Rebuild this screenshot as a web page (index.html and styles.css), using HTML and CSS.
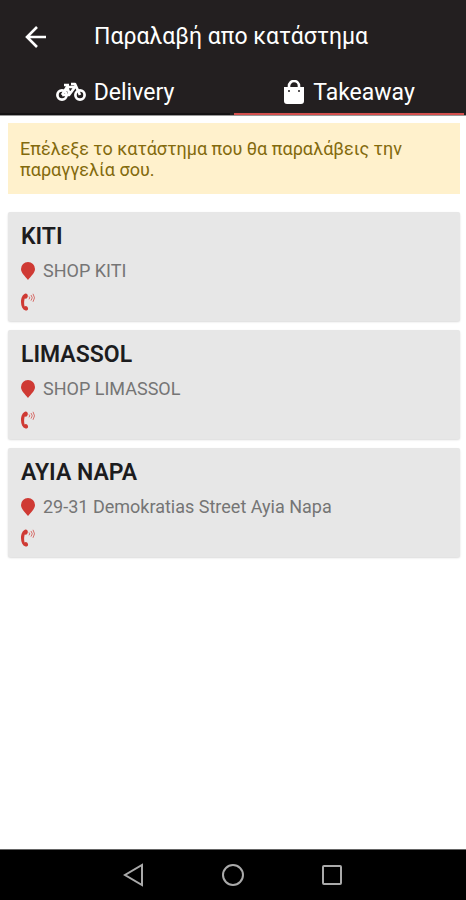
FILE: index.html
```html
<!DOCTYPE html>
<html lang="el">
<head>
  <meta charset="UTF-8">
  <meta name="viewport" content="width=device-width, initial-scale=1">
  <title>Παραλαβή απο κατάστημα</title>
  <link rel="stylesheet" href="styles.css">
</head>
<body>
  <!-- shared icons -->
  <svg class="sprite" aria-hidden="true">
    <symbol id="icon-pin" viewBox="0 0 14 18">
      <path d="M7 0a7 7 0 0 0-7 7c0 4 4 7 7 11 3-4 7-7 7-11a7 7 0 0 0-7-7z" fill="currentColor"/>
    </symbol>
    <symbol id="icon-phone" viewBox="0 0 14 18">
      <path d="M4.500.500C1.500 1.500 0 5 0 9c0 4.500 1.500 7.500 4.500 8.500 1.200.4 2.600-.5 2.600-1.800 0-1.400-1.200-2.700-2.400-2.700l-1 .4C3 12 2.900 7.500 3.800 5.500l1.200.2c1.200-.3 2-1.800 1.800-3.100C6.600 1.300 5.600.300 4.500.500z" fill="currentColor"/>
      <path d="M8 3.500q1.500 1.200 0 2.800M10 2q2.500 2.700 0 5.600M12 .8q3 4 0 8" fill="none" stroke="currentColor" stroke-width="1" opacity=".7"/>
    </symbol>
  </svg>

  <header class="header">
    <div class="title-bar">
      <button class="back" type="button" aria-label="Πίσω">
        <svg width="24" height="24" viewBox="0 0 24 24" fill="none" stroke="currentColor" stroke-width="2.600">
          <path d="M13 2 3 12l10 10M3 12h19"/>
        </svg>
      </button>
      <h1>Παραλαβή απο κατάστημα</h1>
    </div>
    <nav class="tabs">
      <a class="tab" href="#delivery">
        <svg width="30" height="20" viewBox="0 0 30 20" fill="none" stroke="currentColor" stroke-width="2.700" stroke-linejoin="round">
          <circle cx="6" cy="13" r="4.600"/>
          <circle cx="24" cy="13" r="4.600"/>
          <path d="M6 13l5-8h8l-6 8H6M11 5l3 8M24 13L19 2h-4M8 3h5"/>
        </svg>
        Delivery
      </a>
      <a class="tab active" href="#takeaway">
        <svg width="22" height="24" viewBox="0 0 22 24">
          <path d="M6 8V6a5 5 0 0 1 10 0v2" fill="none" stroke="currentColor" stroke-width="2.600"/>
          <path d="M1 7h20v14a3 3 0 0 1-3 3H4a3 3 0 0 1-3-3z" fill="currentColor"/>
          <circle cx="6" cy="11" r="1" fill="#231f20"/>
          <circle cx="16" cy="11" r="1" fill="#231f20"/>
        </svg>
        Takeaway
      </a>
    </nav>
  </header>

  <main class="content">
    <p class="notice">Επέλεξε το κατάστημα που θα παραλάβεις την παραγγελία σου.</p>

    <div class="shops">
      <section class="shop">
        <h2>KITI</h2>
        <p class="address"><svg class="icon"><use href="#icon-pin"/></svg>SHOP KITI</p>
        <a class="phone" href="#call-kiti" aria-label="Κλήση KITI"><svg class="icon"><use href="#icon-phone"/></svg></a>
      </section>
      <section class="shop">
        <h2>LIMASSOL</h2>
        <p class="address"><svg class="icon"><use href="#icon-pin"/></svg>SHOP LIMASSOL</p>
        <a class="phone" href="#call-limassol" aria-label="Κλήση LIMASSOL"><svg class="icon"><use href="#icon-phone"/></svg></a>
      </section>
      <section class="shop">
        <h2>AYIA NAPA</h2>
        <p class="address"><svg class="icon"><use href="#icon-pin"/></svg>29-31 Demokratias Street Ayia Napa</p>
        <a class="phone" href="#call-ayia-napa" aria-label="Κλήση AYIA NAPA"><svg class="icon"><use href="#icon-phone"/></svg></a>
      </section>
    </div>
  </main>

  <!-- system navigation -->
  <footer class="system-bar">
    <button type="button" aria-label="Back">
      <svg width="24" height="24" viewBox="0 0 24 24"><path d="M20 2v20L3 12z"/></svg>
    </button>
    <button type="button" aria-label="Home">
      <svg width="24" height="24" viewBox="0 0 24 24"><circle cx="12" cy="12" r="10"/></svg>
    </button>
    <button type="button" aria-label="Recent apps">
      <svg width="24" height="24" viewBox="0 0 24 24"><rect x="3" y="3" width="18" height="18" rx="1"/></svg>
    </button>
  </footer>
</body>
</html>
```
FILE: styles.css
```css
* {
  box-sizing: border-box;
}

body {
  display: flex;
  flex-direction: column;
  min-height: 100vh;
  margin: 0;
  background: #fff;
  color: #1c1c1e;
  font-family: Roboto, "Open Sans", sans-serif;
}

h1, h2, p {
  margin: 0;
}

svg {
  display: block;
  flex: none;
}

button {
  padding: 0;
  border: 0;
  background: none;
  color: inherit;
  cursor: pointer;
}

.sprite {
  display: none;
}

/* header */
.header {
  background: #231f20;
  color: #fff;
  border-bottom: 1px solid #999;
}

.title-bar {
  display: flex;
  align-items: center;
  gap: 46px;
  height: 73px;
  padding-left: 24px;
}

.title-bar h1 {
  font-size: 23px;
  font-weight: 400;
}

.tabs {
  display: flex;
  gap: 4px;
  padding-right: 2px;
}

.tab {
  flex: 1;
  display: flex;
  justify-content: center;
  align-items: center;
  gap: 8px;
  height: 42px;
  padding-bottom: 2px;
  border-bottom: 2px solid #141213;
  color: #fff;
  font-size: 23px;
  text-decoration: none;
}

.tab.active {
  border-bottom-color: #d4504e;
}

/* content */
.content {
  flex: 1;
  padding: 7px 6px 8px 8px;
}

.notice {
  padding: 15px 12px 14px;
  background: #fff1cc;
  color: #836a0c;
  font-size: 18px;
  line-height: 21px;
}

.shops {
  display: grid;
  gap: 9px;
  margin-top: 18px;
}

.shop {
  padding: 10px 13px;
  border-radius: 2px;
  background: #e7e7e7;
  box-shadow: 0 1px 2px rgba(0, 0, 0, 0.15);
}

.shop h2 {
  font-size: 23px;
  line-height: 30px;
  font-weight: 600;
}

.address {
  display: flex;
  align-items: center;
  gap: 8px;
  padding-top: 6px;
  color: #757575;
  font-size: 18px;
  line-height: 26px;
}

.icon {
  width: 14px;
  height: 18px;
  color: #cf3a34;
}

.phone {
  display: block;
  width: 14px;
  margin-top: 9px;
}

/* system navigation */
.system-bar {
  display: flex;
  justify-content: center;
  align-items: center;
  gap: 75px;
  height: 51px;
  border-top: 1px solid #666;
  background: #000;
}

.system-bar svg {
  fill: none;
  stroke: #aaa;
  stroke-width: 2;
}
```
